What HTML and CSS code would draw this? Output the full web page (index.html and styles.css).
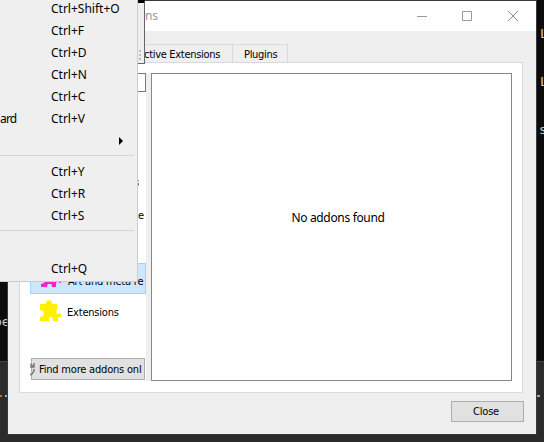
FILE: index.html
```
<!DOCTYPE html>
<html lang="en">
<head>
<meta charset="utf-8">
<title>Addons</title>
<link rel="stylesheet" href="styles.css">
</head>
<body>
<div class="desktop">
  <div class="editor"></div>
  <span class="code left">be</span>
  <span class="code r1">L</span>
  <span class="code r2">L</span>
  <span class="code r3">s</span>
  <i class="dots d1"></i><i class="dots d2"></i><i class="dots d3"></i>
  <div class="topline"></div>

  <main class="dialog">
    <header class="titlebar">
      <span class="title">ons</span>
      <svg class="controls" width="104" height="14" viewBox="0 0 104 14" fill="none" stroke="#999">
        <path d="M0 7.500H10M45.500 2.500h9v9h-9z"/>
        <path d="M91 2l10 10M101 2L91 12" stroke="#888"/>
      </svg>
    </header>
    <div class="tabs">
      <div class="tab active-ext"><span>ctive Extensions</span></div>
      <div class="tab plugins"><span>Plugins</span></div>
    </div>
    <section class="pane">
      <aside class="sidebar">
        <div class="search"></div>
        <div class="item hidden-a"><span>s</span></div>
        <div class="item hidden-b"><span>e</span></div>
        <div class="item selected">
          <svg class="puzzle" width="22" height="23" viewBox="0 0 22 23"><path fill="#ff22c4" d="M1 3H7V2Q7 0 10 0t3 2v1h5v8h1l2 1v4h-2v-1h-2l-1 1v4h-4v-1l-1-2H8l-1 2v1H1v-3l3-1 1-2 1-2-2-2H1z"/></svg>
          <span class="art">Art and meta re</span>
        </div>
        <div class="item ext">
          <svg class="puzzle" width="22" height="23" viewBox="0 0 22 23"><path fill="#fff000" d="M1 4h6V2l1-1 2-1 2 1 1 1v2h5v5l-1 3 1 2h1l1-1 2 1v3h-3v4h-5v-2l-1-2h-2l-1 2v2H1v-4l3-1 1-2-1-3-1-1-2 1z"/></svg>
          <span class="extensions">Extensions</span>
        </div>
        <div class="find">
          <svg class="link" width="5" height="13" viewBox="0 0 5 13"><path d="M0 1l4 3M0 4h4V0M4 6v2L2 11l-2 1" fill="none" stroke="#777" stroke-width="1.500"/></svg>
          <span>Find more addons onl</span>
        </div>
      </aside>
      <div class="splitter"></div>
      <div class="content"><span>No addons found</span></div>
    </section>
    <footer class="footer"><button class="close"><span>Close</span></button></footer>
  </main>

  <div class="panel"><i></i><i></i><i></i></div>

  <nav class="menu">
    <div class="row"><kbd>Ctrl+Shift+O</kbd></div>
    <div class="row"><kbd>Ctrl+F</kbd></div>
    <div class="row"><kbd>Ctrl+D</kbd></div>
    <div class="row"><kbd>Ctrl+N</kbd></div>
    <div class="row"><kbd>Ctrl+C</kbd></div>
    <div class="row"><span class="label">ard</span><kbd>Ctrl+V</kbd></div>
    <div class="row"><svg class="arrow" width="4" height="8" viewBox="0 0 4 8"><path d="M0 0l4 4-4 4z"/></svg></div>
    <hr>
    <div class="row"><kbd>Ctrl+Y</kbd></div>
    <div class="row"><kbd>Ctrl+R</kbd></div>
    <div class="row"><kbd>Ctrl+S</kbd></div>
    <hr>
    <div class="row"></div>
    <div class="row"><kbd>Ctrl+Q</kbd></div>
  </nav>
</div>
</body>
</html>
```

FILE: styles.css
```
* { box-sizing: border-box; }
body { margin: 0; font: 12px/16px "Noto Sans", sans-serif; color: #000; }
.desktop { position: relative; width: 544px; height: 442px; overflow: hidden; background: #0c0c0c; }
.desktop span, .desktop kbd { white-space: nowrap; }
.editor { position: absolute; left: 0; top: 361px; width: 544px; height: 81px; background: #2b2b2b; border-top: 1px solid #454545; }
.code { position: absolute; font: 13px/16px "DejaVu Sans Mono", monospace; color: #ccc; }
.left { left: -6px; top: 314px; }
.r1 { left: 540px; top: 26px; }
.r2 { left: 540px; top: 74px; }
.r3 { left: 539px; top: 122px; }
.dots { position: absolute; height: 2px; width: 2px; top: 395px; background: #b87333; }
.d1 { left: 0; }
.d2 { left: 5px; background: #9ab0c8; }
.d3 { left: 537px; width: 3px; background: #a0a8b0; }
.topline { position: absolute; left: 180px; top: 0; width: 350px; height: 1px; background: repeating-linear-gradient(90deg, #333 0 8px, #888 8px 10px, #222 10px 13px, #777 13px 15px, #333 15px 27px); }

.dialog { position: absolute; left: 8px; top: 1px; width: 528px; height: 433px; background: #efefef; box-shadow: 0 0 0 1px #393939; display: flex; flex-direction: column; }
.titlebar { height: 30px; flex: none; background: #fff; display: flex; align-items: center; justify-content: space-between; padding: 0 6px 0 130px; }
.title { color: #999; letter-spacing: -.2px; }
.controls { display: block; width: 104px; margin-right: 9px; }
.tabs { height: 31px; flex: none; padding: 13px 0 0 120px; display: flex; }
.tab, .item, .find, .close { font-family: "DejaVu Sans Condensed", "DejaVu Sans", sans-serif; font-size: 11px; font-stretch: condensed; letter-spacing: -.2px; }
.tab { height: 18px; border: 1px solid #d9d9d9; border-bottom: 0; display: flex; align-items: center; letter-spacing: -.3px; }
.active-ext { width: 104px; border-right: 0; padding-left: 15px; }
.plugins { width: 56px; padding-left: 11px; }
.tab span { position: relative; top: 1px; }
.pane { margin-left: 11px; width: 504px; height: 331px; flex: none; background: #fff; border: 1px solid #d9d9d9; padding: 10px; display: flex; }
.sidebar { width: 116px; display: flex; flex-direction: column; flex: none; }
.search { height: 19px; flex: none; border: 1px solid #7a7a7a; }
.item { display: flex; align-items: center; flex: none; overflow: hidden; }
.hidden-a, .hidden-b { justify-content: flex-end; height: 33px; }
.hidden-a { margin-top: 74px; padding-right: 7px; }
.hidden-b { padding-right: 2px; }
.selected { height: 31px; margin-top: 31px; background: #cce8ff; border: 1px solid #99d1ff; padding-left: 9px; }
.ext { height: 34px; margin-top: 1px; padding-left: 9px; }
.puzzle { flex: none; }
.ext .puzzle { margin-top: -1px; }
.art { margin: 7px 0 0 6px; }
.extensions { margin: 2px 0 0 6px; }
.find { position: relative; width: 114px; height: 22px; margin: 29px 0 0 1px; border: 1px solid #adadad; background: #e1e1e1; display: flex; align-items: center; padding-left: 7px; }
.find span { position: relative; top: 1px; }
.link { position: absolute; left: -2px; top: 4px; }
.splitter { width: 5px; height: 308px; background: #efefef; flex: none; }
.content { width: 361px; height: 308px; flex: none; border: 1px solid #828790; display: flex; justify-content: center; align-items: center; padding: 0 0 18px 13px; letter-spacing: -.33px; }
.footer { display: flex; justify-content: flex-end; padding: 8px 12px 0 0; }
.close { width: 73px; height: 21px; border: 1px solid #adadad; background: #e1e1e1; color: #000; padding: 1px 3px 0 0; line-height: 16px; }

.panel { position: absolute; left: 100px; top: 0; width: 45px; height: 64px; background: #efefef; border: 1px solid #666; border-top: 3px solid #000; display: flex; flex-direction: column; align-items: flex-end; justify-content: flex-end; gap: 2px; padding: 0 3px 3px; }
.panel i { width: 2px; height: 2px; background: #bbb; }
.menu { position: absolute; left: 0; top: -2px; width: 138px; height: 284px; background: #efefef; border: solid #ccc; border-width: 0 1px 1px 0; }
.row { height: 22px; display: grid; grid-template-columns: 51px 67px 1fr; align-items: center; }
.row kbd { font: inherit; grid-column: 2; grid-row: 1; }
.label { grid-column: 1; grid-row: 1; letter-spacing: -.8px; }
.arrow { grid-column: 3; margin-left: 1px; }
hr { border: 0; height: 1px; margin: 3px 3px 5px 0; background: #d5d5d5; }
```
